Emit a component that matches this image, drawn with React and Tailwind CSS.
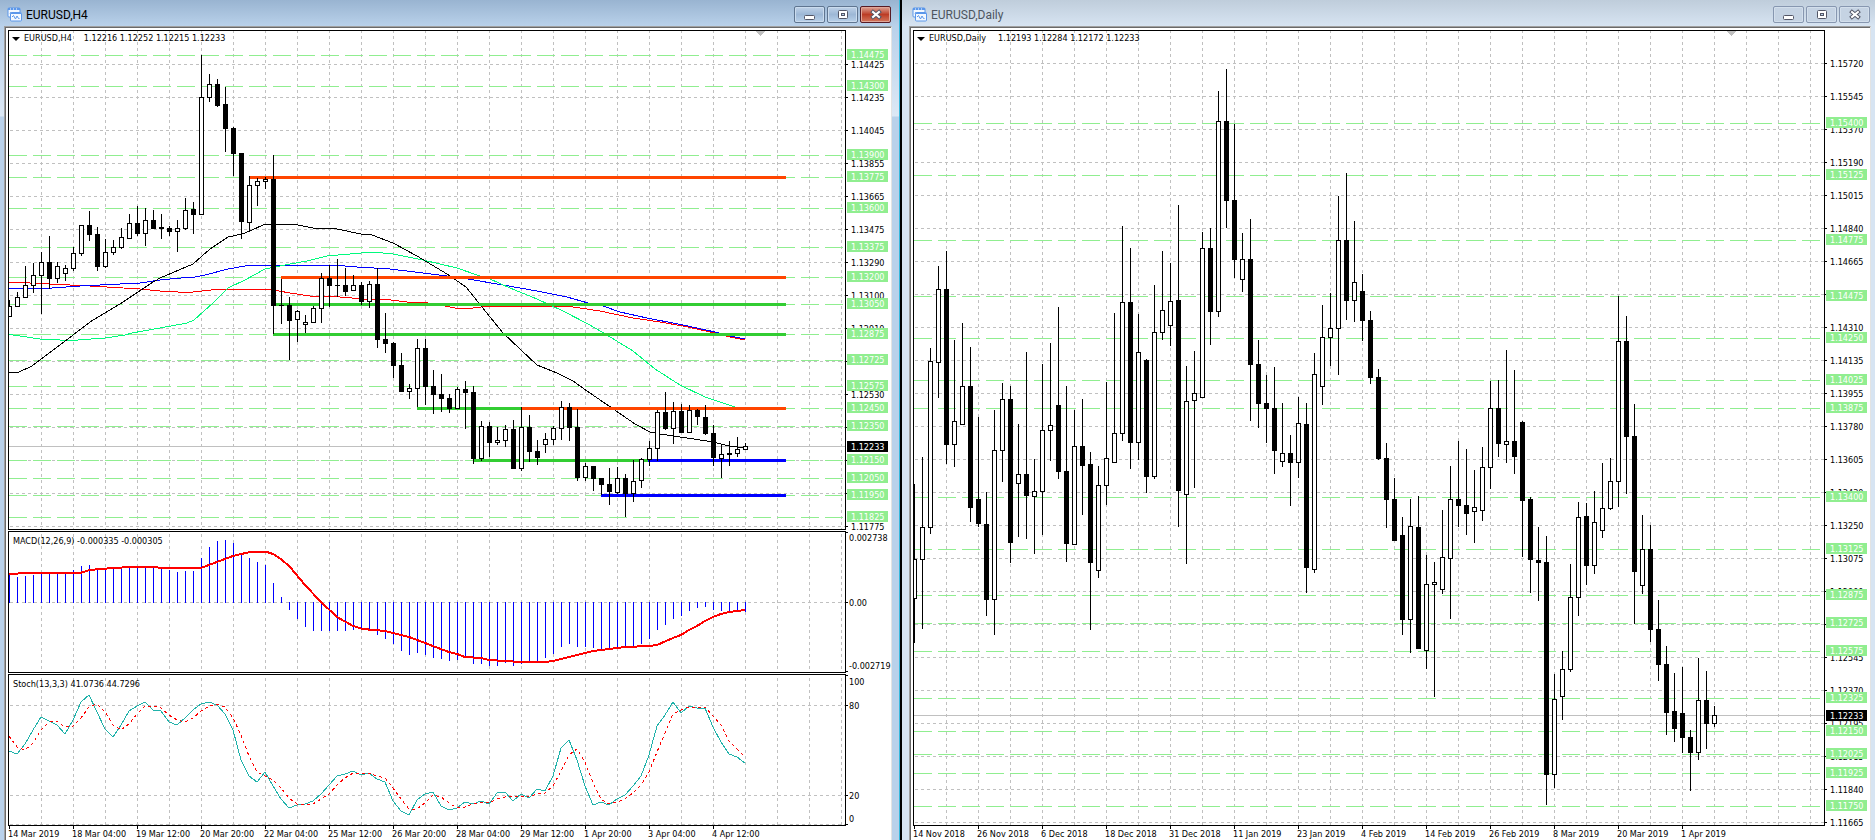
import { Fragment } from 'react';
import clsx from 'clsx';

const STEP = 8;

// [high, body top, body bottom, low, rising]
const H4_CANDLES = [
  [300, 306, 316, 316, 1], [292, 297, 306, 307, 1], [266, 285, 297, 297, 1], [263, 275, 285, 293, 1],
  [252, 262, 275, 314, 1], [236, 262, 278, 289, 0], [262, 266, 278, 283, 1], [265, 268, 273, 281, 1],
  [247, 253, 268, 271, 1], [225, 225, 253, 256, 1], [211, 225, 234, 241, 0], [227, 234, 266, 271, 0],
  [239, 252, 266, 268, 1], [240, 247, 252, 255, 1], [228, 237, 247, 249, 1], [214, 223, 238, 238, 1],
  [206, 223, 233, 236, 0], [208, 220, 233, 246, 1], [210, 220, 228, 229, 0], [214, 227, 228, 239, 0],
  [226, 228, 231, 236, 0], [220, 228, 231, 252, 1], [198, 210, 228, 230, 1], [202, 209, 214, 234, 0],
  [55, 97, 214, 214, 1], [74, 84, 97, 102, 1], [79, 84, 105, 107, 0], [87, 104, 128, 152, 0],
  [127, 128, 153, 176, 0], [153, 153, 221, 239, 0], [176, 185, 222, 232, 1], [178, 181, 185, 206, 1],
  [177, 179, 181, 189, 1], [155, 179, 305, 334, 0], [279, 305, 305, 324, 0], [297, 305, 320, 360, 0],
  [310, 311, 319, 342, 1], [315, 322, 324, 333, 1], [306, 308, 322, 322, 1], [273, 278, 308, 323, 1],
  [265, 278, 285, 307, 0], [259, 285, 285, 297, 0], [268, 285, 291, 296, 0], [275, 285, 290, 291, 1],
  [282, 285, 301, 305, 0], [281, 284, 301, 308, 1], [268, 284, 339, 348, 0], [313, 339, 343, 353, 0],
  [342, 343, 365, 378, 0], [353, 365, 391, 392, 0], [384, 388, 391, 399, 1], [339, 348, 388, 407, 1],
  [339, 348, 386, 405, 0], [370, 386, 394, 414, 0], [374, 394, 398, 412, 0], [394, 398, 408, 413, 0],
  [387, 389, 408, 408, 1], [381, 389, 392, 429, 0], [386, 392, 458, 464, 0], [421, 426, 458, 461, 1],
  [422, 426, 442, 457, 0], [427, 440, 442, 445, 1], [425, 429, 440, 447, 1], [420, 429, 468, 468, 0],
  [407, 427, 468, 471, 1], [415, 427, 451, 462, 0], [440, 451, 457, 465, 0], [433, 439, 444, 453, 1],
  [426, 428, 439, 445, 1], [401, 407, 428, 440, 1], [403, 407, 427, 441, 0], [409, 427, 477, 481, 0],
  [463, 466, 477, 481, 1], [466, 466, 478, 491, 0], [478, 478, 484, 495, 0], [468, 484, 491, 505, 0],
  [467, 478, 492, 494, 1], [474, 478, 493, 517, 0], [460, 481, 493, 502, 1], [458, 459, 480, 488, 1],
  [441, 448, 459, 466, 1], [410, 412, 448, 461, 1], [392, 412, 428, 430, 0], [402, 411, 428, 444, 1],
  [404, 411, 432, 433, 0], [405, 410, 432, 432, 1], [409, 410, 416, 425, 0], [405, 417, 433, 435, 0],
  [425, 433, 457, 466, 0], [444, 454, 458, 478, 1], [441, 453, 454, 466, 0], [437, 449, 453, 457, 1],
  [443, 446, 449, 449, 1],
];

const DAILY_CANDLES = [
  [484, 559, 598, 643, 1], [457, 527, 559, 629, 1], [348, 361, 527, 534, 1], [266, 289, 362, 398, 1],
  [251, 289, 444, 464, 0], [340, 421, 444, 467, 1], [323, 386, 424, 425, 1], [347, 386, 507, 522, 0],
  [417, 499, 523, 527, 0], [492, 524, 599, 616, 0], [410, 450, 599, 635, 1], [383, 399, 450, 482, 1],
  [386, 399, 542, 563, 0], [424, 474, 483, 537, 1], [352, 474, 495, 539, 0], [459, 491, 496, 554, 1],
  [364, 430, 491, 535, 1], [343, 425, 430, 461, 1], [307, 405, 471, 479, 0], [386, 471, 543, 562, 0],
  [410, 446, 544, 545, 1], [399, 446, 465, 515, 0], [452, 464, 562, 630, 0], [466, 485, 570, 578, 1],
  [382, 458, 485, 505, 1], [313, 433, 462, 463, 1], [226, 302, 433, 441, 1], [248, 302, 442, 469, 0],
  [314, 352, 442, 460, 1], [359, 360, 476, 493, 0], [285, 332, 476, 479, 1], [251, 310, 332, 340, 1],
  [263, 301, 325, 346, 1], [205, 300, 490, 527, 0], [366, 401, 494, 564, 1], [351, 393, 400, 488, 1],
  [232, 248, 397, 397, 1], [228, 248, 311, 345, 0], [91, 121, 311, 317, 1], [69, 121, 200, 228, 0],
  [124, 200, 259, 278, 0], [233, 259, 279, 292, 1], [219, 259, 364, 421, 0], [340, 364, 403, 428, 0],
  [375, 403, 408, 443, 0], [367, 408, 450, 474, 0], [403, 453, 461, 467, 1], [435, 453, 462, 506, 0],
  [397, 423, 462, 478, 1], [403, 424, 567, 593, 0], [353, 374, 569, 573, 1], [305, 337, 386, 405, 1],
  [293, 328, 337, 366, 1], [196, 240, 328, 375, 1], [173, 240, 300, 320, 0], [221, 282, 300, 322, 1],
  [274, 291, 320, 341, 0], [311, 320, 377, 384, 0], [369, 377, 458, 460, 0], [443, 458, 499, 528, 0],
  [478, 499, 540, 540, 0], [517, 535, 619, 635, 0], [499, 526, 619, 653, 1], [496, 527, 648, 648, 0],
  [555, 584, 650, 669, 1], [562, 582, 584, 697, 1], [510, 557, 589, 594, 1], [466, 499, 558, 619, 1],
  [441, 499, 505, 527, 0], [449, 505, 513, 535, 0], [470, 507, 511, 543, 1], [447, 467, 510, 521, 1],
  [381, 408, 467, 489, 1], [380, 408, 443, 457, 0], [350, 441, 444, 463, 1], [370, 441, 456, 474, 0],
  [421, 422, 500, 557, 0], [497, 499, 559, 593, 0], [527, 560, 562, 601, 0], [536, 562, 774, 805, 0],
  [674, 699, 774, 788, 1], [651, 669, 696, 720, 1], [564, 597, 669, 672, 1], [502, 517, 597, 616, 1],
  [503, 516, 565, 585, 0], [491, 522, 565, 574, 1], [463, 508, 530, 538, 1], [458, 481, 508, 510, 1],
  [296, 341, 481, 507, 1], [316, 341, 436, 494, 0], [404, 436, 571, 624, 0], [515, 549, 585, 594, 1],
  [525, 549, 629, 642, 0], [600, 629, 664, 681, 0], [646, 664, 712, 735, 0], [673, 711, 728, 742, 0],
  [667, 713, 737, 753, 0], [730, 737, 752, 791, 0], [658, 700, 752, 760, 1], [671, 700, 723, 749, 0],
  [706, 715, 723, 727, 1],
];

const H4_LEVELS = [
  [55, '1.14475'], [86, '1.14300'], [155, '1.13900'], [177, '1.13775'], [208, '1.13600'], [247, '1.13375'],
  [277, '1.13200'], [304, '1.13050'], [334, '1.12875'], [360, '1.12725'], [386, '1.12575'], [408, '1.12450'],
  [426, '1.12350'], [460, '1.12150'], [478, '1.12050'], [495, '1.11950'], [517, '1.11825'],
];

const DAILY_LEVELS = [
  [123, '1.15400'], [175, '1.15125'], [240, '1.14775'], [296, '1.14475'], [338, '1.14250'], [380, '1.14025'],
  [408, '1.13875'], [497, '1.13400'], [549, '1.13125'], [595, '1.12875'], [623, '1.12725'], [651, '1.12575'],
  [698, '1.12325'], [731, '1.12150'], [754, '1.12025'], [773, '1.11925'], [806, '1.11750'],
];

const H4_PRICES = [
  '1.14425', '1.14235', '1.14045', '1.13855', '1.13665', '1.13475', '1.13290', '1.13100',
  '1.12910', '1.12720', '1.12530', '1.12340', '1.12155', '1.11965', '1.11775',
];

const DAILY_PRICES = [
  '1.15720', '1.15545', '1.15370', '1.15190', '1.15015', '1.14840', '1.14665', '1.14485',
  '1.14310', '1.14135', '1.13955', '1.13780', '1.13605', '1.13430', '1.13250', '1.13075',
  '1.12900', '1.12720', '1.12545', '1.12370', '1.12195', '1.12015', '1.11840', '1.11665',
];

const H4_TIMES = [
  '14 Mar 2019', '18 Mar 04:00', '19 Mar 12:00', '20 Mar 20:00', '22 Mar 04:00', '25 Mar 12:00',
  '26 Mar 20:00', '28 Mar 04:00', '29 Mar 12:00', '1 Apr 20:00', '3 Apr 04:00', '4 Apr 12:00',
];

const DAILY_TIMES = [
  '14 Nov 2018', '26 Nov 2018', '6 Dec 2018', '18 Dec 2018', '31 Dec 2018', '11 Jan 2019', '23 Jan 2019',
  '4 Feb 2019', '14 Feb 2019', '26 Feb 2019', '8 Mar 2019', '20 Mar 2019', '1 Apr 2019',
];

const AVERAGES = [
  {
    color: '#ff0000',
    points: '9,282 50,284 90,286 140,289 160,291 178,292 193,292 220,289 268,289 290,293 310,296 340,297 363,299 383,299 407,302 422,302 445,306 455,308 473,308 490,306 543,306 573,307 600,311 633,318 660,322 683,326 715,333 730,337 745,340',
  },
  {
    color: '#0000ff',
    points: '9,288 30,289 52,288 80,286 120,284 140,283 160,280 181,278 195,277 205,275 228,269 245,266 265,265 290,265 317,266 333,265 357,267 390,269 423,273 447,276 468,279 503,285 537,291 567,297 588,303 603,306 620,312 647,318 683,325 715,332 730,336 745,339',
  },
  {
    color: '#00fa7d',
    points: '9,334 13,335 40,339 60,340 78,340 105,338 125,335 132,333 160,328 187,323 194,320 213,303 228,288 245,280 265,269 280,266 290,264 307,261 327,256 350,254 373,252 393,254 423,260 457,268 477,275 490,279 510,288 537,299 563,311 588,324 602,332 633,351 655,369 680,385 705,397 720,402 735,407',
  },
  {
    color: '#000000',
    points: '9,372 19,372 32,366 60,345 90,322 120,304 150,284 160,278 193,264 210,249 228,237 242,234 250,231 265,224 293,224 313,228 337,229 361,234 372,235 393,243 417,256 447,274 466,287 482,307 503,333 537,365 557,373 573,381 587,391 609,406 635,424 650,432 660,434 687,438 713,442 729,446 737,447 745,447',
  },
];

// [y, from x, to x, colour]
const TREND_LINES = [
  [177, 249, 786, '#ff4500'],
  [277, 281, 786, '#ff4500'],
  [304, 273, 786, '#32cd32'],
  [334, 273, 786, '#32cd32'],
  [408, 417, 521, '#32cd32'],
  [408, 521, 786, '#ff4500'],
  [460, 473, 649, '#32cd32'],
  [460, 648, 786, '#0000ff'],
  [495, 601, 786, '#0000ff'],
];

const MACD_BARS = [
  574, 577, 576, 575, 573, 573, 573, 573, 570, 566, 565, 568, 569, 569, 568, 567, 567, 567, 567, 568,
  570, 572, 571, 571, 558, 547, 541, 540, 543, 555, 558, 562, 565, 583, 597, 609, 618, 626, 630, 630,
  630, 630, 630, 629, 628, 629, 634, 638, 643, 650, 654, 652, 654, 657, 658, 660, 659, 657, 663, 663,
  665, 665, 662, 665, 663, 661, 660, 657, 653, 646, 643, 646, 646, 647, 649, 649, 648, 647, 646, 643,
  638, 629, 624, 618, 615, 610, 607, 606, 609, 610, 611, 611, 611,
];

const MACD_SIGNAL =
  '9,574 27,573 80,573 90,570 100,569 130,567 153,567 163,568 201,568 217,562 233,556 250,552 267,552 273,554 281,559 290,567 305,585 321,602 337,617 353,626 363,629 385,631 409,637 425,643 449,652 457,654 465,657 481,658 489,660 505,661 521,662 545,662 553,661 569,657 593,651 617,648 625,647 649,646 657,645 673,638 681,635 689,630 697,626 705,621 713,617 721,614 729,612 745,610';

const STOCH_MAIN = [
  751, 754, 744, 730, 717, 721, 725, 734, 720, 702, 695, 712, 729, 737, 725, 711, 706, 702, 710, 711,
  722, 725, 718, 710, 704, 702, 705, 714, 730, 760, 776, 782, 772, 786, 799, 808, 805, 804, 801, 794,
  785, 776, 774, 771, 775, 773, 779, 782, 801, 811, 815, 800, 794, 792, 806, 810, 808, 802, 804, 801,
  804, 793, 792, 801, 794, 798, 789, 791, 776, 748, 740, 760, 786, 805, 802, 805, 799, 795, 786, 776,
  755, 726, 715, 702, 713, 706, 708, 708, 727, 742, 754, 757, 763,
];

const STOCH_SIGNAL = [
  736, 747, 750, 743, 730, 722, 721, 727, 726, 718, 707, 704, 712, 725, 730, 724, 714, 706, 706, 708,
  715, 720, 722, 718, 711, 706, 704, 707, 718, 735, 756, 772, 776, 780, 788, 798, 804, 805, 804, 799,
  794, 785, 778, 773, 773, 773, 776, 778, 788, 799, 809, 809, 803, 795, 797, 803, 808, 807, 804, 802,
  803, 799, 797, 796, 796, 797, 794, 793, 786, 771, 755, 749, 762, 783, 799, 804, 802, 799, 793, 785,
  772, 752, 733, 714, 710, 707, 708, 707, 716, 725, 741, 749, 757,
];

const toPoints = (values) => values.map((y, i) => `${i * STEP},${y}`).join(' ');

function Grid({ rows, columns }) {
  return (
    <g stroke="#c0c0c0" strokeDasharray="3 3">
      {rows.map((y) => (
        <line key={y} x1="1" x2="100%" y1={y + 0.5} y2={y + 0.5} />
      ))}
      {Array.from({ length: columns }, (_, i) => (
        <line key={i} x1={32 * (i + 1) + 0.5} x2={32 * (i + 1) + 0.5} y1="30" y2="840" />
      ))}
    </g>
  );
}

function Candle({ x, candle }) {
  const [high, top, bottom, low, rising] = candle;

  return (
    <Fragment>
      <rect x={x} y={high} width="1" height={Math.max(low - high, 1)} fill="#000" />
      <rect x={x - 2} y={top} width="5" height={bottom - top + 1} fill="#000" />
      {rising === 1 && <rect x={x - 1} y={top + 1} width="3" height={Math.max(bottom - top - 1, 0)} fill="#fff" />}
    </Fragment>
  );
}

function Plot({ top, className, children }) {
  return (
    <svg className={clsx('min-w-0 flex-1 border border-black bg-white', className)} shapeRendering="crispEdges">
      <g transform={`translate(0 ${-top})`}>{children}</g>
    </svg>
  );
}

function PriceChart({ candles, levels, rows, columns, price, marker, className, children }) {
  return (
    <Plot top={31} className={className}>
      <Grid rows={rows} columns={columns} />
      {levels.map(([y]) => (
        <line key={y} x1="0" x2="100%" y1={y + 0.5} y2={y + 0.5} stroke="#90ee90" strokeDasharray="18 6" />
      ))}
      <line x1="0" x2="100%" y1={price + 0.5} y2={price + 0.5} stroke="#c0c0c0" />
      {children}
      {candles.map((candle, i) => (
        <Candle key={i} x={i * STEP} candle={candle} />
      ))}
      <polygon points={`${marker - 4},31 ${marker + 5},31 ${marker + 0.5},36`} fill="#c0c0c0" />
    </Plot>
  );
}

function PriceAxis({ rows, labels, levels, price, className }) {
  return (
    <svg className={clsx('w-[45px] shrink-0 overflow-visible text-[9px]', className)}>
      <g transform="translate(0 -30)">
        {rows.map((y, i) => (
          <Fragment key={y}>
            <rect y={y} width="2" height="1" />
            <text x="5" y={y + 4}>{labels[i]}</text>
          </Fragment>
        ))}
        {levels.map(([y, label]) => (
          <Fragment key={y}>
            <rect x="1" y={y - 6} width="41" height="11" fill="#90ee90" />
            <text x="5" y={y + 3} fill="#fff">{label}</text>
          </Fragment>
        ))}
        <rect x="1" y={price - 5} width="41" height="11" />
        <text x="5" y={price + 4} fill="#fff">1.12233</text>
      </g>
    </svg>
  );
}

function IndicatorAxis({ labels, className }) {
  return (
    <svg className={clsx('w-[45px] shrink-0 text-[9px]', className)}>
      {labels.map(([tick, y, label]) => (
        <Fragment key={label}>
          <rect y={tick} width="2" height="1" />
          <text x="3" y={y}>{label}</text>
        </Fragment>
      ))}
    </svg>
  );
}

function TimeAxis({ labels }) {
  return (
    <div className="flex text-[9px] leading-[11px]">
      {labels.map((label) => (
        <div key={label} className="w-16 shrink-0 whitespace-nowrap">
          <div className="ml-px h-[3px] w-px bg-black" />
          {label}
        </div>
      ))}
    </div>
  );
}

function ChartCaption({ symbol, quotes }) {
  return (
    <div className="absolute top-[3px] left-1 flex h-3 items-center whitespace-pre text-[9px]">
      <svg className="mr-1 h-1 w-2" viewBox="0 0 8 4">
        <path d="M0 0h8L4 4z" />
      </svg>
      <span>{symbol}</span>
      <span className="ml-3">{quotes}</span>
    </div>
  );
}

function WindowIcon() {
  return (
    <svg className="h-[15px] w-[15px]" viewBox="0 0 15 15" fill="none">
      <rect x="1" y="1" width="12" height="9" rx="1" fill="#f4f9ff" stroke="#5b97ea" />
      <path d="M1 2h12" stroke="#5b97ea" strokeWidth="2" />
      <path d="M3 2h1M6 2h1M9 2h1" stroke="#fff" />
      <path d="M3 7l1-2 2 2" stroke="#5b97ea" />
      <rect x="3.5" y="5.5" width="11" height="8.5" rx="1" fill="#f4f9ff" stroke="#5b97ea" />
      <path d="M4 6.5h10" stroke="#5b97ea" />
      <path d="M5 10l1.500-1.500L8.500 12l1.500-3 1.500 2.500h1" stroke="#5b97ea" />
    </svg>
  );
}

function MinimizeGlyph() {
  return (
    <svg className="h-[13px] w-4" viewBox="0 0 16 13">
      <rect x="2.5" y="7.500" width="10" height="4" rx="1" fill="#fff" stroke="#535666" />
    </svg>
  );
}

function MaximizeGlyph() {
  return (
    <svg className="h-[13px] w-4" viewBox="0 0 16 13">
      <rect x="3.500" y="2.500" width="9" height="8" rx="1" fill="#fff" stroke="#535666" />
      <rect x="6.500" y="5.500" width="3" height="2" fill="#b9d1ea" stroke="#535666" />
    </svg>
  );
}

function CloseGlyph() {
  return (
    <svg className="h-[13px] w-4" viewBox="0 0 16 13">
      <path d="M5 4l6 5M11 4l-6 5" stroke="#535666" strokeWidth="4" strokeLinecap="square" />
      <path d="M5 4l6 5M11 4l-6 5" stroke="#fff" strokeWidth="2" strokeLinecap="square" />
    </svg>
  );
}

function CaptionButton({ label, active, danger, children }) {
  return (
    <button
      type="button"
      aria-label={label}
      className={clsx(
        'flex h-[17px] w-[31px] items-center justify-center rounded-xs border inset-ring',
        danger && 'border-[#571a24] bg-linear-to-b from-[#dba296] via-[#bc3c25] to-[#d2765c] inset-ring-[#e0a698]',
        !danger && active && 'border-[#5f7590] bg-linear-to-b from-[#bfd2e8] via-[#9db8d6] to-[#b9d1ea] inset-ring-[#cbdcee]',
        !danger && !active && 'border-[#8797b0] bg-[#c5d3e3] inset-ring-[#d3dfec]'
      )}
    >
      {children}
    </button>
  );
}

function ChartWindow({ title, active, className, children }) {
  return (
    <section
      className={clsx(
        'flex min-w-0 flex-col overflow-hidden',
        active
          ? 'bg-[#b9d1ea] bg-[linear-gradient(#99b4d1,#b9d1ea_26px,#dce8f5_116px,#b9d1ea_117px)]'
          : 'bg-[#d7e4f2] bg-[linear-gradient(#bfcddb,#d7e4f2_26px)]',
        className
      )}
    >
      <header
        className={clsx(
          'flex h-[26px] shrink-0 items-center bg-linear-to-b pt-[3px] pl-[3px]',
          active ? 'from-[#99b4d1] to-[#b9d1ea] text-black' : 'from-[#bfcddb] to-[#d7e4f2] text-[#4d5560]'
        )}
      >
        <WindowIcon />
        <h1 className="ml-1 flex-1 font-[Roboto,sans-serif] text-xs">{title}</h1>
        <div className="flex gap-0.5 pr-px">
          <CaptionButton label={`Minimize ${title}`} active={active}>
            <MinimizeGlyph />
          </CaptionButton>
          <CaptionButton label={`Maximize ${title}`} active={active}>
            <MaximizeGlyph />
          </CaptionButton>
          <CaptionButton label={`Close ${title}`} active={active} danger={active}>
            <CloseGlyph />
          </CaptionButton>
        </div>
      </header>
      <div className="flex-1 border-t border-r border-l border-t-[#a0a0a0] border-r-[#e3e3e3] border-l-[#a0a0a0] bg-white">
        <div className="h-full border-t border-l border-[#696969] pt-0.5 pl-0.5">{children}</div>
      </div>
    </section>
  );
}

const H4_ROWS = H4_PRICES.map((_, i) => 64 + 33 * i);
const DAILY_ROWS = DAILY_PRICES.map((_, i) => 63 + 33 * i);

export default function App() {
  return (
    <main className="flex min-h-screen bg-black font-['DejaVu_Sans_Condensed','DejaVu_Sans',sans-serif] text-black">
      <ChartWindow title="EURUSD,H4" active className="w-[48%] border-r border-[#36b8dc] pr-[7px] pl-1">
        <div className="relative flex">
          <PriceChart
            candles={H4_CANDLES}
            levels={H4_LEVELS}
            rows={H4_ROWS}
            columns={26}
            price={446}
            marker={751}
            className="h-[500px]"
          >
            <g transform="translate(-9 0)" fill="none">
              {AVERAGES.map(({ color, points }) => (
                <polyline key={color} points={points} stroke={color} />
              ))}
              {TREND_LINES.map(([y, from, to, color]) => (
                <line key={`${y}-${from}`} x1={from} x2={to} y1={y + 0.5} y2={y + 0.5} stroke={color} strokeWidth="3" />
              ))}
            </g>
          </PriceChart>
          <PriceAxis rows={H4_ROWS} labels={H4_PRICES} levels={H4_LEVELS} price={446} className="h-[500px]" />
          <ChartCaption symbol="EURUSD,H4" quotes="1.12216 1.12252 1.12215 1.12233" />
        </div>

        <div className="relative mt-px flex">
          <Plot top={532} className="h-[142px]">
            <Grid rows={[602]} columns={26} />
            {MACD_BARS.map((y, i) => (
              <rect
                key={i}
                x={i * STEP}
                y={Math.min(y, 602)}
                width="1"
                height={Math.abs(602 - y) + 1}
                fill="#0000ff"
              />
            ))}
            <polyline points={MACD_SIGNAL} transform="translate(-9 0)" fill="none" stroke="#ff0000" strokeWidth="2" />
          </Plot>
          <IndicatorAxis
            className="h-[142px]"
            labels={[[1, 10, '0.002738'], [71, 75, '0.00'], [140, 138, '-0.002719']]}
          />
          <p className="absolute top-0.5 left-[5px] text-[9px] leading-4">MACD(12,26,9) -0.000335 -0.000305</p>
        </div>

        <div className="relative mt-px flex">
          <Plot top={675} className="h-[152px]">
            <Grid rows={[705, 795, 824]} columns={26} />
            <polyline points={toPoints(STOCH_MAIN)} fill="none" stroke="#20b2aa" />
            <polyline points={toPoints(STOCH_SIGNAL)} fill="none" stroke="#ff0000" strokeDasharray="3 3" />
          </Plot>
          <IndicatorAxis
            className="h-[152px]"
            labels={[[1, 11, '100'], [31, 35, '80'], [121, 125, '20'], [150, 148, '0']]}
          />
          <p className="absolute top-0.5 left-[5px] text-[9px] leading-4">Stoch(13,3,3) 41.0736 44.7296</p>
        </div>
        <TimeAxis labels={H4_TIMES} />
      </ChartWindow>

      <ChartWindow title="EURUSD,Daily" className="ml-0.5 flex-1 pr-1 pl-[7px]">
        <div className="relative flex">
          <PriceChart
            candles={DAILY_CANDLES}
            levels={DAILY_LEVELS}
            rows={DAILY_ROWS}
            columns={28}
            price={715}
            marker={817}
            className="h-[796px]"
          />
          <PriceAxis rows={DAILY_ROWS} labels={DAILY_PRICES} levels={DAILY_LEVELS} price={715} className="h-[796px]" />
          <ChartCaption symbol="EURUSD,Daily" quotes="1.12193 1.12284 1.12172 1.12233" />
        </div>
        <TimeAxis labels={DAILY_TIMES} />
      </ChartWindow>
    </main>
  );
}
